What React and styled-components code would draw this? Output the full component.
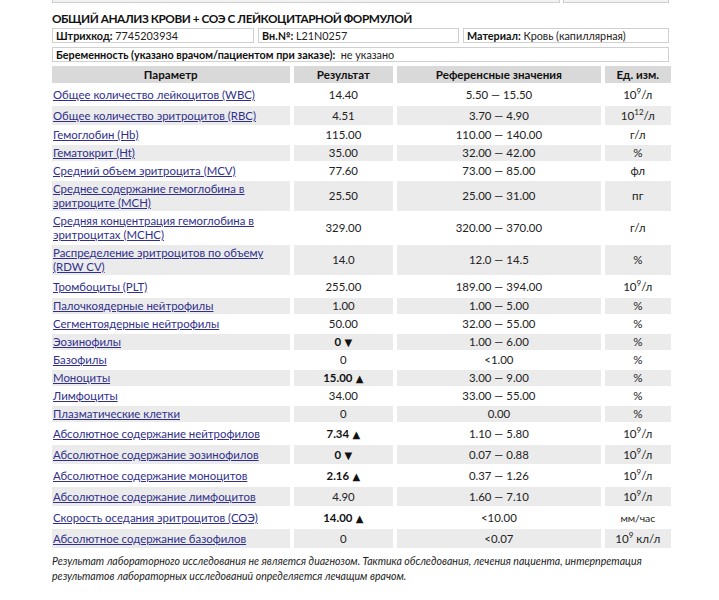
import React from "react";
import styled, { createGlobalStyle } from "styled-components";

const GlobalStyle = createGlobalStyle`
  html, body {
    margin: 0;
    padding: 0;
    background: #ffffff;
  }
  body {
    font-family: Lato, "Open Sans", "DejaVu Sans", sans-serif;
    color: #1e1e1e;
  }
`;

const rows = [
  { name: "Общее количество лейкоцитов (WBC)", value: "14.40", ref: "5.50 — 15.50", unit: ["10", "9", "/л"], tall: true },
  { name: "Общее количество эритроцитов (RBC)", value: "4.51", ref: "3.70 — 4.90", unit: ["10", "12", "/л"], tall: true },
  { name: "Гемоглобин (Hb)", value: "115.00", ref: "110.00 — 140.00", unit: "г/л" },
  { name: "Гематокрит (Ht)", value: "35.00", ref: "32.00 — 42.00", unit: "%" },
  { name: "Средний объем эритроцита (MCV)", value: "77.60", ref: "73.00 — 85.00", unit: "фл" },
  { name: "Среднее содержание гемоглобина в эритроците (MCH)", value: "25.50", ref: "25.00 — 31.00", unit: "пг" },
  { name: "Средняя концентрация гемоглобина в эритроцитах (MCHC)", value: "329.00", ref: "320.00 — 370.00", unit: "г/л" },
  { name: "Распределение эритроцитов по объему (RDW CV)", value: "14.0", ref: "12.0 — 14.5", unit: "%" },
  { name: "Тромбоциты (PLT)", value: "255.00", ref: "189.00 — 394.00", unit: ["10", "9", "/л"], tall: true },
  { name: "Палочкоядерные нейтрофилы", value: "1.00", ref: "1.00 — 5.00", unit: "%" },
  { name: "Сегментоядерные нейтрофилы", value: "50.00", ref: "32.00 — 55.00", unit: "%" },
  { name: "Эозинофилы", value: "0", flag: "down", ref: "1.00 — 6.00", unit: "%" },
  { name: "Базофилы", value: "0", ref: "<1.00", unit: "%" },
  { name: "Моноциты", value: "15.00", flag: "up", ref: "3.00 — 9.00", unit: "%" },
  { name: "Лимфоциты", value: "34.00", ref: "33.00 — 55.00", unit: "%" },
  { name: "Плазматические клетки", value: "0", ref: "0.00", unit: "%" },
  { name: "Абсолютное содержание нейтрофилов", value: "7.34", flag: "up", ref: "1.10 — 5.80", unit: ["10", "9", "/л"], tall: true },
  { name: "Абсолютное содержание эозинофилов", value: "0", flag: "down", ref: "0.07 — 0.88", unit: ["10", "9", "/л"], tall: true },
  { name: "Абсолютное содержание моноцитов", value: "2.16", flag: "up", ref: "0.37 — 1.26", unit: ["10", "9", "/л"], tall: true },
  { name: "Абсолютное содержание лимфоцитов", value: "4.90", ref: "1.60 — 7.10", unit: ["10", "9", "/л"], tall: true },
  { name: "Скорость оседания эритроцитов (СОЭ)", value: "14.00", flag: "up", ref: "<10.00", unit: "мм/час", tall: true },
  { name: "Абсолютное содержание базофилов", value: "0", ref: "<0.07", unit: ["10", "9", " кл/л"], tall: true },
];

const Unit = ({ unit }) => {
  if (typeof unit === "string") return unit;
  return (
    <>
      {unit[0]}
      <Sup>{unit[1]}</Sup>
      {unit[2]}
    </>
  );
};

const App = () => {
  return (
    <>
      <GlobalStyle />
      <Page>
        <TopStrip>
          <StripBox />
          <StripBox narrow />
        </TopStrip>
        <Title>ОБЩИЙ АНАЛИЗ КРОВИ + СОЭ С ЛЕЙКОЦИТАРНОЙ ФОРМУЛОЙ</Title>
        <InfoGrid>
          <InfoBox>
            <b>Штрихкод:</b> 7745203934
          </InfoBox>
          <InfoBox>
            <b>Вн.№:</b> L21N0257
          </InfoBox>
          <InfoBox>
            <b>Материал:</b> Кровь (капиллярная)
          </InfoBox>
          <InfoBox wide>
            <b>Беременность (указано врачом/пациентом при заказе):</b>&nbsp; не указано
          </InfoBox>
        </InfoGrid>
        <Table>
          <colgroup>
            <col style={{ width: 236 }} />
            <col style={{ width: 99 }} />
            <col style={{ width: 202 }} />
            <col style={{ width: 66 }} />
          </colgroup>
          <thead>
            <tr>
              <Th>Параметр</Th>
              <Th>Результат</Th>
              <Th>Референсные значения</Th>
              <Th>Ед. изм.</Th>
            </tr>
          </thead>
          <tbody>
            {rows.map((r, i) => (
              <Row key={r.name} $shaded={i % 2 === 1} $tall={r.tall}>
                <NameCell>
                  <ParamLink href="#">{r.name}</ParamLink>
                </NameCell>
                <ValueCell $bold={!!r.flag}>
                  {r.value}
                  {r.flag === "up" && <Flag> ▲</Flag>}
                  {r.flag === "down" && <Flag> ▼</Flag>}
                </ValueCell>
                <RefCell>{r.ref}</RefCell>
                <UnitCell $small={r.unit === "мм/час"}>
                  <Unit unit={r.unit} />
                </UnitCell>
              </Row>
            ))}
          </tbody>
        </Table>
        <Note>
          Результат лабораторного исследования не является диагнозом. Тактика обследования, лечения
          пациента, интерпретация результатов лабораторных исследований определяется лечащим врачом.
        </Note>
      </Page>
    </>
  );
};

export default App;

const Page = styled.div`
  width: 617px;
  padding: 0 0 0 52px;
  box-sizing: content-box;
`;

const TopStrip = styled.div`
  display: flex;
  gap: 3px;
  height: 3px;
`;

const StripBox = styled.div`
  flex: ${(p) => (p.narrow ? "0 0 104px" : "1")};
  border: 1px solid #cfcfcf;
  border-top: none;
  background: #f2f2f2;
`;

const Title = styled.h1`
  margin: 7px 0 0 0;
  font-size: 11.8px;
  line-height: 17px;
  font-weight: 700;
  color: #111;
  letter-spacing: -0.45px;
`;

const InfoGrid = styled.div`
  display: grid;
  grid-template-columns: 202px 201px 1fr;
  column-gap: 4px;
  row-gap: 4px;
  margin-top: 1px;
`;

const InfoBox = styled.div`
  grid-column: ${(p) => (p.wide ? "1 / -1" : "auto")};
  border: 1px solid #d0d0d0;
  height: 13px;
  padding: 0 3px;
  font-size: 10.8px;
  line-height: 13px;
  color: #222;
  white-space: nowrap;
  overflow: hidden;

  b {
    font-weight: 700;
    color: #111;
  }
`;

const Table = styled.table`
  table-layout: fixed;
  border-collapse: separate;
  border-spacing: 4px 2px;
  width: 627px;
  margin: 2px 0 0 -4px;
  font-size: 11.4px;
`;

const Th = styled.th`
  background: #d9d9d9;
  font-weight: 700;
  font-size: 11.6px;
  line-height: 14px;
  height: 14px;
  padding: 2px 4px 1px;
  color: #111;
  text-align: center;
`;

const Row = styled.tr`
  td {
    background: ${(p) => (p.$shaded ? "#ebebeb" : "transparent")};
    height: ${(p) => (p.$tall ? "17px" : "14px")};
  }
`;

const Cell = styled.td`
  padding: 1px 4px;
  line-height: 14px;
  vertical-align: middle;
  color: #222;
`;

const NameCell = styled(Cell)`
  text-align: left;
  padding-left: 1px;
`;

const ParamLink = styled.a`
  color: #30308c;
  text-decoration: underline;
  text-underline-offset: 1px;
`;

const ValueCell = styled(Cell)`
  text-align: center;
  font-weight: ${(p) => (p.$bold ? 700 : 400)};
  color: ${(p) => (p.$bold ? "#111" : "#222")};
`;

const Flag = styled.span`
  font-family: "DejaVu Sans", sans-serif;
  font-size: 10px;
  line-height: 10px;
`;

const RefCell = styled(Cell)`
  text-align: center;
`;

const UnitCell = styled(Cell)`
  text-align: center;
  font-size: ${(p) => (p.$small ? "10.4px" : "11.6px")};
`;

const Sup = styled.sup`
  font-size: 8px;
  line-height: 0;
  vertical-align: 5px;
`;

const Note = styled.p`
  margin: 4px 0 0 0;
  font-size: 10.55px;
  line-height: 15px;
  font-style: italic;
  color: #222;
  width: 605px;
`;
